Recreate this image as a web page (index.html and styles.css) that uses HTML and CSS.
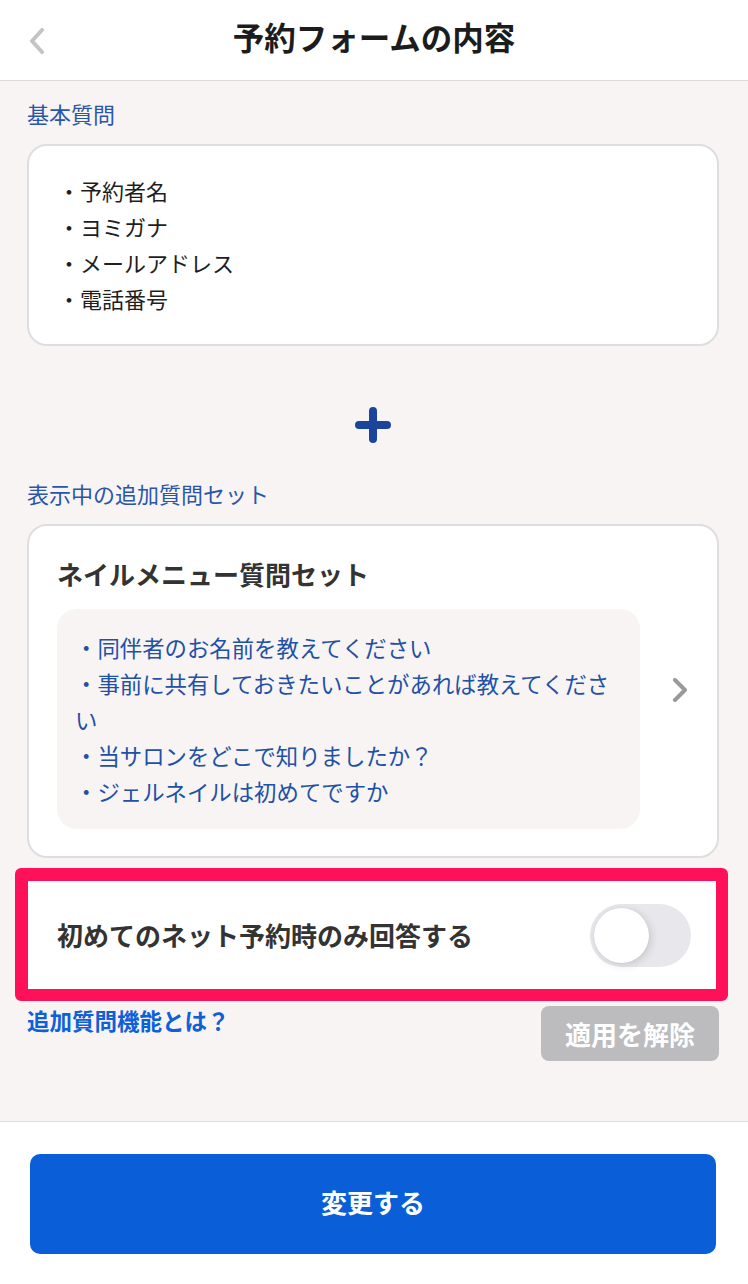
FILE: index.html
```html
<!DOCTYPE html>
<html lang="ja">
<head>
<meta charset="utf-8">
<title>予約フォームの内容</title>
<link rel="stylesheet" href="styles.css">
</head>
<body>
<div class="page">
  <header class="topbar">
    <div class="back">
      <svg width="16" height="26" viewBox="0 0 16 26"><path d="M13 2 L3 13 L13 24" fill="none" stroke="#c4c4c4" stroke-width="4" stroke-linecap="round" stroke-linejoin="round"/></svg>
    </div>
    <h1 class="title">予約フォームの内容</h1>
    <div></div>
  </header>

  <main class="content">
    <div class="label label-first">基本質問</div>
    <div class="card basic">
      <div class="line">・予約者名</div>
      <div class="line">・ヨミガナ</div>
      <div class="line">・メールアドレス</div>
      <div class="line">・電話番号</div>
    </div>

    <div class="plus">
      <svg width="36" height="36" viewBox="0 0 36 36"><path d="M18 4 V32 M4 18 H32" stroke="#1a459b" stroke-width="8" stroke-linecap="round"/></svg>
    </div>

    <div class="label">表示中の追加質問セット</div>
    <div class="card set">
      <div class="set-main">
        <div class="set-title">ネイルメニュー質問セット</div>
        <div class="qbox">
          <div class="line">・同伴者のお名前を教えてください</div>
          <div class="line">・事前に共有しておきたいことがあれば教えてください</div>
          <div class="line">・当サロンをどこで知りましたか？</div>
          <div class="line">・ジェルネイルは初めてですか</div>
        </div>
      </div>
      <div class="next">
        <svg width="16" height="24" viewBox="0 0 16 24"><path d="M3 2 L13 12 L3 22" fill="none" stroke="#9a9a9a" stroke-width="4" stroke-linecap="round" stroke-linejoin="round"/></svg>
      </div>
    </div>

    <div class="highlight">
      <div class="toggle-card">
        <span class="toggle-text">初めてのネット予約時のみ回答する</span>
        <span class="switch"><span class="knob"></span></span>
      </div>
    </div>

    <div class="actions">
      <a class="help">追加質問機能とは？</a>
      <span class="unapply">適用を解除</span>
    </div>
  </main>

  <footer class="footer">
    <button class="submit">変更する</button>
  </footer>
</div>
</body>
</html>
```

FILE: styles.css
```css
* { box-sizing: border-box; }
html, body {
  margin: 0;
  padding: 0;
}
body {
  font-family: "Noto Sans CJK JP", "Noto Sans", sans-serif;
  background: #f8f4f3;
  color: #222;
}
.page {
  width: 748px;
  min-height: 1284px;
  display: flex;
  flex-direction: column;
}
.topbar {
  height: 81px;
  background: #fff;
  border-bottom: 1px solid #dcdada;
  display: grid;
  grid-template-columns: 1fr auto 1fr;
  align-items: center;
}
.back {
  padding-left: 29px;
  padding-top: 1px;
  display: flex;
  align-items: center;
}
.title {
  margin: 0;
  font-size: 31.5px;
  font-weight: 700;
  color: #1c1c1c;
  line-height: 40px;
  margin-top: -8px;
}
.content {
  flex: 1;
  padding: 0 29px 0 27px;
}
.label {
  font-size: 22px;
  line-height: 30px;
  color: #2a56a8;
  margin-bottom: 16px;
}
.label-first {
  margin-top: 17px;
  margin-bottom: 16px;
}
.card {
  background: #fff;
  border: 2px solid #dedde2;
  border-radius: 20px;
}
.basic {
  padding: 26px 29px 28px;
}
.line {
  font-size: 22px;
  line-height: 36px;
}
.basic .line {
  color: #1e1e1e;
}
.plus {
  display: flex;
  justify-content: center;
  margin: 61px 0 35px;
  height: 36px;
}
.set {
  display: flex;
  align-items: center;
  padding: 30px 0 27px 28px;
}
.set-title {
  font-size: 26px;
  font-weight: 700;
  line-height: 36px;
  color: #333;
}
.qbox {
  width: 583px;
  margin-top: 17px;
  background: #f8f4f3;
  border-radius: 20px;
  padding: 20px 20px 20px 18px;
}
.qbox .line {
  color: #2150a6;
  font-size: 22.4px;
}
.next {
  flex: 1;
  display: flex;
  justify-content: center;
  padding-left: 2px;
  margin-top: -6px;
}
.highlight {
  margin: 10px -9px 0 -12px;
  border: 13px solid #ff1159;
  border-bottom-width: 12px;
  border-right-width: 12px;
  border-radius: 6px;
  background: #fff;
}
.toggle-card {
  height: 108px;
  display: flex;
  align-items: center;
  justify-content: space-between;
  padding: 0 25px 0 29px;
}
.toggle-text {
  font-size: 26px;
  font-weight: 700;
  color: #333;
  margin-top: -2px;
}
.switch {
  width: 101px;
  height: 63px;
  border-radius: 32px;
  background: #e8e8ec;
  position: relative;
}
.knob {
  position: absolute;
  left: 4px;
  top: 4px;
  width: 55px;
  height: 55px;
  border-radius: 50%;
  background: #fff;
  box-shadow: 2px 2px 8px rgba(0,0,0,0.14), 0 0 1px rgba(0,0,0,0.12);
}
.actions {
  display: flex;
  justify-content: space-between;
  align-items: flex-start;
  margin-top: 5px;
}
.help {
  font-size: 22.5px;
  font-weight: 700;
  color: #0e60d8;
  line-height: 28px;
}
.unapply {
  width: 178px;
  height: 55px;
  border-radius: 8px;
  background: #bcbcbe;
  color: #fff;
  font-size: 26px;
  font-weight: 700;
  display: flex;
  align-items: center;
  justify-content: center;
}
.footer {
  background: #fff;
  border-top: 1px solid #e0dcdc;
  padding: 32px 32px 30px 30px;
}
.submit {
  display: flex;
  align-items: center;
  justify-content: center;
  width: 100%;
  height: 100px;
  padding-bottom: 6px;
  border: none;
  border-radius: 10px;
  background: #0a5ed8;
  color: #fff;
  font-family: "Noto Sans CJK JP", "Noto Sans", sans-serif;
  font-size: 26px;
  font-weight: 700;
}
```
